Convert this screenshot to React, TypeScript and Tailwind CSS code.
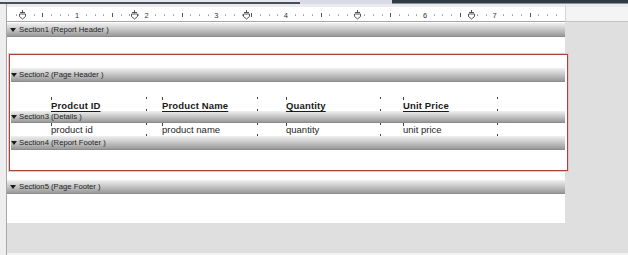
import React from "react";

const PX = 69.6;
const X0 = 0.5;

function Ruler() {
  const ticks: React.ReactNode[] = [];
  for (let i = 1; i < 64; i++) {
    const x = X0 + (i * PX) / 8;
    if (x > 555) break;
    if (i % 8 === 0) continue;
    if (i % 4 === 0) {
      ticks.push(<rect key={"h" + i} x={Math.round(x)} y={6} width={1} height={4} fill="#555" />);
    } else {
      ticks.push(<rect key={"t" + i} x={Math.round(x)} y={7.5} width={1} height={1.2} fill="#777" />);
    }
  }
  const labels = [1, 2, 3, 4, 6, 7].map((n) => (
    <text key={"l" + n} x={X0 + n * PX} y={10.5} fontSize="7.5" textAnchor="middle" fill="#333">
      {n}
    </text>
  ));
  const markers = [15, 127, 239, 350, 464].map((m) => (
    <g key={"m" + m} stroke="#444" strokeWidth="0.9" fill="#fff">
      <line x1={m + 0.5} y1={3} x2={m + 0.5} y2={6} />
      <line x1={m - 2} y1={5.5} x2={m + 3} y2={5.5} />
      <path d={`M${m - 2.5} 7 L${m + 3.5} 7 L${m + 3.5} 9.5 L${m + 0.5} 12 L${m - 2.5} 9.5 Z`} />
    </g>
  ));
  return (
    <svg width="558" height="14" className="block">
      {ticks}
      {labels}
      {markers}
    </svg>
  );
}

function Arrow() {
  return (
    <svg width="6" height="4" className="shrink-0">
      <path d="M0 0 L6 0 L3 4 Z" fill="#1c1c1c" />
    </svg>
  );
}

function Field({
  text,
  header,
  w,
  ml,
}: {
  text: string;
  header?: boolean;
  w: string;
  ml: string;
}) {
  return (
    <div className={`relative flex items-end shrink-0 ${w} ${ml} ${header ? "h-[14px]" : "h-[13px]"}`}>
      <span className="absolute left-0 top-[0px] w-[1px] h-[3px] bg-[#444]" />
      <span className="absolute right-0 top-[0px] w-[1px] h-[2px] bg-[#444]" />
      <span className="absolute right-0 bottom-[0px] w-[1px] h-[2px] bg-[#444]" />
      {header ? (
        <span className="text-[9.5px] font-bold leading-[11px] text-[#1a1a1a] underline underline-offset-[1.5px] tracking-[0.15px]">
          {text}
        </span>
      ) : (
        <span className="text-[9.5px] leading-[13px] text-[#1e1e1e]">{text}</span>
      )}
    </div>
  );
}

export default function App() {
  return (
    <div className="w-[628px] h-[255px] flex flex-col overflow-hidden bg-white font-['Liberation_Sans',Arial,sans-serif]">
      {/* top strip */}
      <div className="flex h-[4px] shrink-0">
        <div className="w-[300px] bg-[#e4e8ee] border-b-2 border-[#45505c]" />
        <div className="w-[92px] bg-[#d9d9e8]" />
        <div className="flex-1 bg-[#2f3b47] border-b border-[#8a939c]" />
      </div>
      <div className="flex flex-1">
        {/* left gutter */}
        <div className="w-[7px] shrink-0 bg-[#eeeeee] border-r border-[#a8a8a8]" />
        <div className="flex-1 flex flex-col bg-[#dfdfdf]">
          {/* ruler row */}
          <div className="flex h-[18px] shrink-0">
            <div className="w-[558px] bg-white border-t-[3px] border-t-[#ebebeb] border-b border-b-[#a6a6a6]">
              <Ruler />
            </div>
            <div className="flex-1 bg-[#f4f4f4] border-t-[3px] border-t-[#ebebeb] border-b border-b-[#c4c4c4] border-l border-l-[#d4d4d4]" />
          </div>
          {/* page */}
          <div className="w-[558px] bg-white flex flex-col pt-[1px]">
            <div className="h-[14px] flex items-center gap-[3px] pl-[3px] bg-gradient-to-b from-[#f0f0f0] via-[#c6c6c6] to-[#999999] border-b border-[#8c8c8c]">
              <Arrow />
              <span className="text-[7.7px] leading-none text-[#222]">Section1 (Report Header )</span>
            </div>
            <div className="h-[17px]" />
            {/* selected group */}
            <div className="ml-[2px] w-[559px] h-[117px] border border-[#a4473a] shadow-[0_0_0_1px_#eec3b9] flex flex-col pl-[1px] pr-[2px] bg-white">
              <div className="h-[13px] shrink-0" />
              <div className="h-[14px] shrink-0 flex items-center gap-[2px] bg-gradient-to-b from-[#f0f0f0] via-[#c6c6c6] to-[#999999] border-b border-[#8c8c8c]">
                <Arrow />
                <span className="text-[7.7px] leading-none text-[#222]">Section2 (Page Header )</span>
              </div>
              <div className="h-[29px] shrink-0 flex items-end -ml-[1px]">
                <Field header text="Prodcut ID" w="w-[96px]" ml="ml-[41px]" />
                <Field header text="Product Name" w="w-[96px]" ml="ml-[15px]" />
                <Field header text="Quantity" w="w-[95px]" ml="ml-[28px]" />
                <Field header text="Unit Price" w="w-[95px]" ml="ml-[22px]" />
              </div>
              <div className="h-[12px] shrink-0 flex items-center gap-[2px] bg-gradient-to-b from-[#f0f0f0] via-[#c6c6c6] to-[#999999] border-b border-[#8c8c8c]">
                <Arrow />
                <span className="text-[7.7px] leading-none text-[#222]">Section3 (Details )</span>
              </div>
              <div className="h-[13px] shrink-0 flex items-end -ml-[1px]">
                <Field text="product id" w="w-[96px]" ml="ml-[41px]" />
                <Field text="product name" w="w-[96px]" ml="ml-[15px]" />
                <Field text="quantity" w="w-[95px]" ml="ml-[28px]" />
                <Field text="unit price" w="w-[95px]" ml="ml-[22px]" />
              </div>
              <div className="h-[14px] shrink-0 flex items-center gap-[2px] bg-gradient-to-b from-[#f0f0f0] via-[#c6c6c6] to-[#999999] border-b border-[#8c8c8c]">
                <Arrow />
                <span className="text-[7.7px] leading-none text-[#222]">Section4 (Report Footer )</span>
              </div>
              <div className="flex-1" />
            </div>
            <div className="h-[9px]" />
            <div className="h-[14px] flex items-center gap-[3px] pl-[3px] bg-gradient-to-b from-[#f0f0f0] via-[#c6c6c6] to-[#999999] border-b border-[#8c8c8c]">
              <Arrow />
              <span className="text-[7.7px] leading-none text-[#222]">Section5 (Page Footer )</span>
            </div>
            <div className="h-[29px]" />
          </div>
          <div className="flex-1" />
          <div className="h-[2px] bg-[#f2f2f2]" />
        </div>
      </div>
    </div>
  );
}
